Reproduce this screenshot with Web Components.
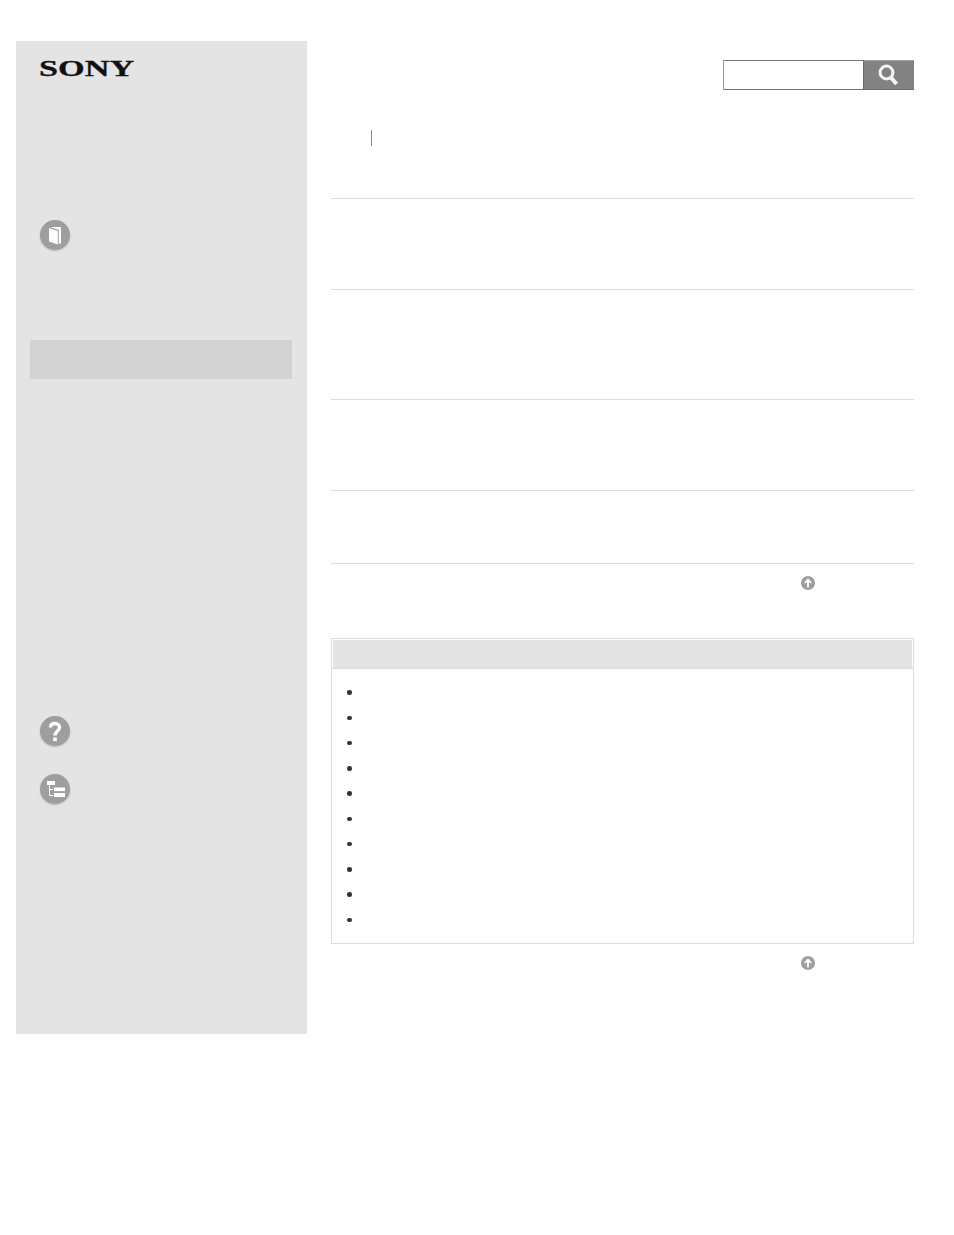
<!DOCTYPE html>
<html>
<head>
<meta charset="utf-8">
<style>
    html, body{
        margin: 0;
        background: white;
        font-family: "Liberation Sans", Arial, sans-serif;
    }
</style>
</head>
<body>
<help-page>
    <help-sidebar slot="sidebar">
        <round-icon slot="top" kind="book"></round-icon>
        <round-icon slot="bottom" kind="help"></round-icon>
        <round-icon slot="bottom" kind="tree"></round-icon>
    </help-sidebar>
    <help-search slot="search"></help-search>
    <help-section style="height:90px"></help-section>
    <help-section style="height:109px"></help-section>
    <help-section style="height:90px"></help-section>
    <help-section style="height:72px"></help-section>
    <help-section style="height:0"></help-section>
    <up-link style="margin-top:12px"></up-link>
    <related-box>
        <list-row></list-row><list-row></list-row><list-row></list-row><list-row></list-row><list-row></list-row>
        <list-row></list-row><list-row></list-row><list-row></list-row><list-row></list-row><list-row></list-row>
    </related-box>
    <up-link style="margin-top:12px"></up-link>
</help-page>

<script>
const ICONS = {
    book: `<polygon points="10.5,7 21,7 21,23.5 18.8,23.5 18.8,10 10.5,7"/><polygon points="9,8 17.8,11 17.8,24.5 9,21.5"/>`,
    help: `<path d="M10.5 11.5C10.5 8.6 12.4 7.5 15 7.5C17.8 7.5 19.5 9.2 19.5 11.5C19.5 15 15 15 15 19.5" fill="none" stroke="white" stroke-width="3.4"/><rect x="13.2" y="21.5" width="3.6" height="3.6"/>`,
    tree: `<rect x="7" y="7" width="8" height="4"/><rect x="14" y="13.5" width="11" height="3.6"/><rect x="14" y="19" width="11" height="4"/><path d="M9.5 11V21.5H13M9.5 15.5H13" fill="none" stroke="white" stroke-width="1"/>`
}

class RoundIcon extends HTMLElement{
    constructor(){
        super()
        this.shadow = this.attachShadow({mode:"open"})
    }

    connectedCallback(){
        this.shadow.innerHTML = `
        <style>
            :host{
                display: block;
                width: 30px;
                height: 30px;
            }
            svg{
                display: block;
                border-radius: 50%;
                background: #9e9e9e;
                box-shadow: 0 1px 2px rgba(0,0,0,.2);
                fill: white;
            }
        </style>
        <svg width="30" height="30" viewBox="0 0 30 30">${ICONS[this.getAttribute('kind')]}</svg>`
    }
}

class HelpSidebar extends HTMLElement{
    constructor(){
        super()
        this.attachShadow({mode:"open"}).innerHTML = `
        <style>
            :host{
                display: flex;
                flex-direction: column;
                box-sizing: border-box;
                width: 291px;
                height: 993px;
                flex: none;
                background: #e4e4e4;
            }
            #logo{
                height: 179px;
                box-sizing: border-box;
                padding: 13px 0 0 23px;
                font: bold 23px/30px "Liberation Serif", "Times New Roman", serif;
                color: #111;
            }
            #logo span{
                display: inline-block;
                transform: scaleX(1.49);
                transform-origin: left center;
                -webkit-text-stroke: .3px #111;
            }
            #top{
                display: block;
                padding-left: 24px;
            }
            #active{
                height: 39px;
                margin: 90px 15px 0 14px;
                background: #d2d2d2;
                border-radius: 1px;
            }
            #bottom{
                display: flex;
                flex-direction: column;
                gap: 28px;
                margin-top: 337px;
                padding-left: 24px;
            }
        </style>
        <div id="logo"><span>SONY</span></div>
        <div id="top"><slot name="top"></slot></div>
        <div id="active"></div>
        <div id="bottom"><slot name="bottom"></slot></div>`
    }
}

class HelpSearch extends HTMLElement{
    constructor(){
        super()
        this.attachShadow({mode:"open"}).innerHTML = `
        <style>
            :host{
                display: flex;
                width: 191px;
                height: 30px;
                margin: 19px 0 0 auto;
            }
            #field{
                flex: 1;
                box-sizing: border-box;
                background: white;
                border: 1px solid #777;
                border-left-color: #999;
                border-right: none;
            }
            #button{
                width: 51px;
                box-sizing: border-box;
                background: #828282;
                border-top: 1px solid #a2a2a2;
                border-left: 1px solid #666;
                border-bottom: 1px solid #6e6e6e;
            }
            svg{
                display: block;
            }
        </style>
        <div id="field"></div>
        <div id="button">
            <svg width="50" height="28" viewBox="0 0 50 28" fill="none" stroke="#f4f4f4">
                <circle cx="22.5" cy="11.5" r="6.4" stroke-width="3"/>
                <path d="M27 16.5L32.5 23" stroke-width="4"/>
            </svg>
        </div>`
    }
}

class HelpSection extends HTMLElement{
    constructor(){
        super()
        this.attachShadow({mode:"open"}).innerHTML = `
        <style>
            :host{
                display: block;
                border-top: 1px solid #dcdcdc;
            }
        </style>`
    }
}

class UpLink extends HTMLElement{
    constructor(){
        super()
        this.attachShadow({mode:"open"}).innerHTML = `
        <style>
            :host{
                display: block;
                height: 14px;
                padding-left: 470px;
            }
            svg{
                display: block;
            }
        </style>
        <svg width="14" height="14" viewBox="0 0 14 14">
            <circle cx="7" cy="7" r="7" fill="#9e9e9e"/>
            <path d="M7 11.5V4M3.8 7L7 3.6L10.2 7" fill="none" stroke="white" stroke-width="1.8"/>
        </svg>`
    }
}

class RelatedBox extends HTMLElement{
    constructor(){
        super()
        this.attachShadow({mode:"open"}).innerHTML = `
        <style>
            :host{
                display: block;
                box-sizing: border-box;
                height: 306px;
                margin-top: 48px;
                border: 1px solid #dcdcdc;
            }
            #head{
                height: 28px;
                margin: 1px 1px 0;
                background: #e4e4e4;
            }
            #line{
                height: 1px;
                background: #dcdcdc;
            }
            #rows{
                padding-top: 11px;
            }
        </style>
        <div id="head"></div>
        <div id="line"></div>
        <div id="rows"><slot></slot></div>`
    }
}

class ListRow extends HTMLElement{
    constructor(){
        super()
        this.attachShadow({mode:"open"}).innerHTML = `
        <style>
            :host{
                display: flex;
                align-items: center;
                height: 25.25px;
                padding-left: 15px;
            }
            i{
                width: 4.5px;
                height: 4.5px;
                border-radius: 50%;
                background: #333;
            }
        </style>
        <i></i>`
    }
}

class HelpPage extends HTMLElement{
    constructor(){
        super()
        this.attachShadow({mode:"open"}).innerHTML = `
        <style>
            :host{
                display: flex;
                gap: 24px;
                padding: 41px 0 201px 16px;
            }
            #main{
                width: 583px;
            }
            #crumb{
                width: 1px;
                height: 16px;
                margin: 40px 0 52px 40px;
                background: #8c8c8c;
            }
        </style>
        <slot name="sidebar"></slot>
        <div id="main">
            <slot name="search"></slot>
            <div id="crumb"></div>
            <slot></slot>
        </div>`
    }
}

customElements.define('round-icon', RoundIcon)
customElements.define('help-sidebar', HelpSidebar)
customElements.define('help-search', HelpSearch)
customElements.define('help-section', HelpSection)
customElements.define('up-link', UpLink)
customElements.define('related-box', RelatedBox)
customElements.define('list-row', ListRow)
customElements.define('help-page', HelpPage)
</script>
</body>
</html>
